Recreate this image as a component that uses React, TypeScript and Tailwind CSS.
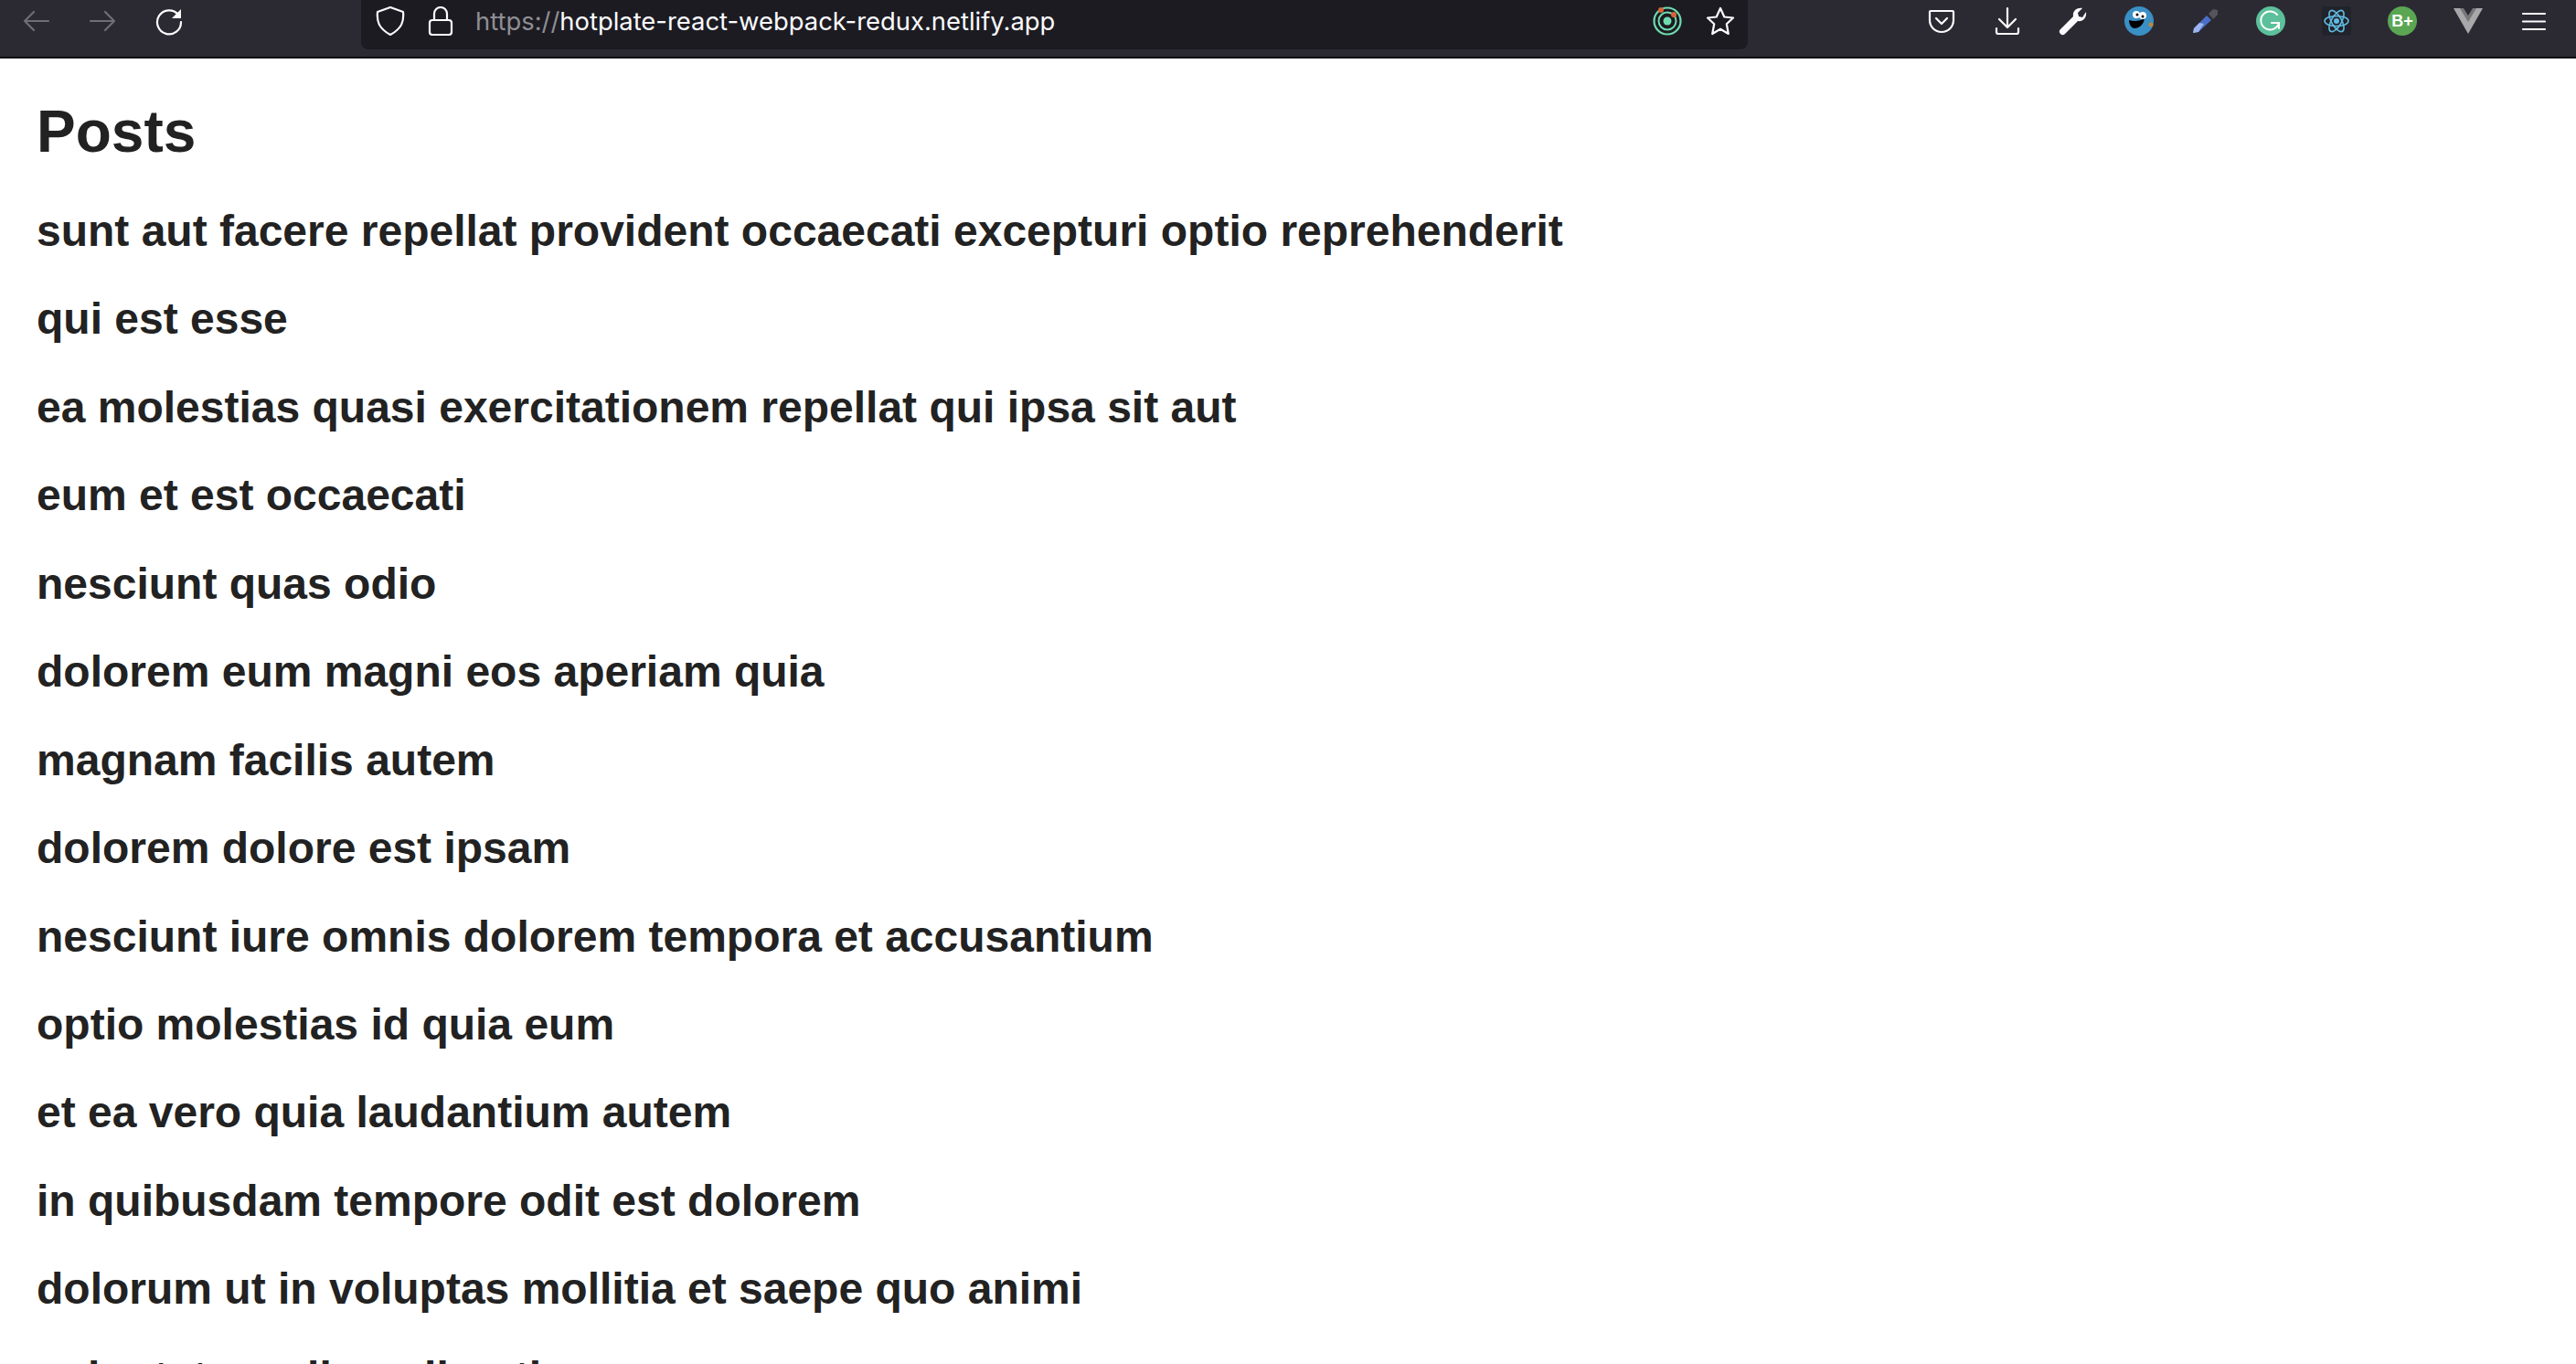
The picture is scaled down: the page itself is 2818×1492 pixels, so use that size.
import React from 'react';

const posts = [
  'sunt aut facere repellat provident occaecati excepturi optio reprehenderit',
  'qui est esse',
  'ea molestias quasi exercitationem repellat qui ipsa sit aut',
  'eum et est occaecati',
  'nesciunt quas odio',
  'dolorem eum magni eos aperiam quia',
  'magnam facilis autem',
  'dolorem dolore est ipsam',
  'nesciunt iure omnis dolorem tempora et accusantium',
  'optio molestias id quia eum',
  'et ea vero quia laudantium autem',
  'in quibusdam tempore odit est dolorem',
  'dolorum ut in voluptas mollitia et saepe quo animi',
  'voluptatem eligendi optio',
];

function Icon({ children, dim }: { children: React.ReactNode; dim?: boolean }) {
  return (
    <svg
      viewBox="0 0 32 32"
      fill="none"
      stroke="currentColor"
      strokeWidth={2.2}
      strokeLinecap="round"
      strokeLinejoin="round"
      className={`w-8 h-8 shrink-0 ${dim ? 'text-[#6f6e75]' : 'text-[#fbfbfe]'}`}
    >
      {children}
    </svg>
  );
}

function Toolbar() {
  return (
    <header className="flex items-start h-[64px] shrink-0 bg-[#2b2a33] border-b-2 border-[#0c0c0d]">
      {/* back, forward, reload */}
      <div className="flex items-center w-[395px] h-[46px] pl-[24px] gap-[40px]">
        <Icon dim><path d="M29 16H3M13 6 3 16l10 10" /></Icon>
        <Icon dim><path d="M3 16h26M19 6l10 10-10 10" /></Icon>
        <Icon>
          <path d="M27 9a13 13 0 1 0 3 8" />
          <path d="M30 3v10H20z" fill="currentColor" stroke="none" />
        </Icon>
      </div>

      {/* url bar */}
      <div className="flex items-center w-[1517px] h-[54px] pb-[8px] pl-[16px] pr-[14px] bg-[#1c1b22] rounded-b-lg">
        <Icon><path d="M16 1 30 6c1 10-1 18-14 25C3 24 1 16 2 6z" /></Icon>
        <div className="ml-[23px]">
          <Icon>
            <rect x="4" y="15" width="24" height="16" rx="3" />
            <path d="M9 15V8a7 7 0 0 1 14 0v7" />
          </Icon>
        </div>
        <div
          className="ml-[22px] mt-[2px] text-[27.4px] leading-none text-[#fbfbfe] whitespace-nowrap"
          style={{ fontFamily: 'Inter, sans-serif' }}
        >
          <span className="text-[#8f8f94]">https://</span>hotplate-react-webpack-redux.netlify.app
        </div>
        <div className="ml-auto flex items-center gap-[26px]">
          <svg viewBox="0 0 32 32" fill="none" className="w-8 h-8 shrink-0">
            <circle cx="16" cy="16" r="14.5" stroke="#6fdcae" strokeWidth="2.2" />
            <circle cx="16" cy="16" r="9.5" stroke="#6fdcae" strokeWidth="2" />
            <circle cx="16" cy="16" r="4.5" fill="#6fdcae" />
            <circle cx="9" cy="4" r="3" fill="#d8643a" />
            <circle cx="23" cy="9" r="3" fill="#d8643a" />
          </svg>
          <Icon><path d="m16 2 4.300 9.500L30 12.500l-7.200 6.800L24.800 30 16 24.800 7.200 30l2-10.700L2 12.500l9.700-1z" /></Icon>
        </div>
      </div>

      {/* extensions */}
      <div className="flex items-center h-[46px] pl-[196px] gap-[40px]">
        <Icon>
          <path d="M4 5h24a1 1 0 0 1 1 1v9a13 13 0 0 1-26 0V6a1 1 0 0 1 1-1z" />
          <path d="m10 13 6 6 6-6" />
        </Icon>
        <Icon>
          <path d="M16 2v21M7 14l9 9 9-9" />
          <path d="M4 24v4a2 2 0 0 0 2 2h20a2 2 0 0 0 2-2v-4" />
        </Icon>
        <svg viewBox="0 0 32 32" className="w-8 h-8 shrink-0">
          <path
            d="M30 6c1 6-3 11-9 10L7 30a3 3 0 0 1-5-5l14-14c-1-6 4-10 10-9l-5 5 1 4 4 1z"
            fill="#fbfbfe"
          />
        </svg>
        <svg viewBox="0 0 32 32" className="w-8 h-8 shrink-0">
          <circle cx="16" cy="16" r="16" fill="#3a8fc4" />
          <path d="M5 15c6 2 12 1 17-2-1 7-6 11-11 11-3 0-6-4-6-9z" fill="#000" />
          <circle cx="13" cy="9" r="4" fill="#fff" />
          <circle cx="20" cy="10" r="4" fill="#fff" />
          <circle cx="14" cy="9" r="1.500" fill="#000" />
          <circle cx="20" cy="11" r="1.500" fill="#000" />
          <circle cx="29" cy="20" r="2.500" fill="#b98a3e" />
        </svg>
        <svg viewBox="0 0 32 32" className="w-8 h-8 shrink-0">
          <path d="m3 29 1-5 14-14 5 5L9 28z" fill="#4a6fc9" />
          <path d="m3 29 1-5 6-6 5 1-6 9z" fill="#9db4ee" />
          <path d="m20 8 5-5 5 1 0 5-5 5z" fill="#55545b" />
        </svg>
        <svg viewBox="0 0 32 32" fill="none" className="w-8 h-8 shrink-0">
          <circle cx="16" cy="16" r="16" fill="#5cc09a" />
          <path d="M23 9a10 10 0 1 0 2 9h-8m8 0v6" stroke="#fff" strokeWidth="2" strokeLinecap="round" />
        </svg>
        <svg viewBox="0 0 32 32" fill="none" className="w-8 h-8 shrink-0">
          <rect width="32" height="32" rx="2" fill="#20232a" />
          <circle cx="16" cy="16" r="3" fill="#61b8e0" />
          <g stroke="#61b8e0" strokeWidth="1.600">
            <ellipse cx="16" cy="16" rx="13" ry="5.500" />
            <ellipse cx="16" cy="16" rx="13" ry="5.500" transform="rotate(60 16 16)" />
            <ellipse cx="16" cy="16" rx="13" ry="5.500" transform="rotate(120 16 16)" />
          </g>
        </svg>
        <div
          className="flex items-center justify-center w-8 h-8 shrink-0 rounded-full bg-[#5ba653] text-white text-[18px] font-bold leading-none"
          style={{ fontFamily: '"Liberation Sans", sans-serif' }}
        >
          B+
        </div>
        <svg viewBox="0 0 32 32" className="w-8 h-8 shrink-0">
          <path d="M0 2h32L16 30z" fill="#a8a8aa" />
          <path d="M7 2h18L16 17z" fill="#77777a" />
          <path d="M11 2h10l-5 8z" fill="#2b2a33" />
        </svg>
        <Icon><path d="M4 8h24M4 16.500h24M4 25h24" /></Icon>
      </div>
    </header>
  );
}

export default function App() {
  return (
    <div
      className="flex flex-col h-[1492px] overflow-hidden bg-white text-[#222222]"
      style={{ fontFamily: '"Liberation Sans", Arial, sans-serif' }}
    >
      <Toolbar />
      <main className="px-[40px]">
        <h1 className="mt-[44px] text-[64px] leading-[72px] font-bold">Posts</h1>
        <div className="mt-[45px] flex flex-col gap-[40.45px]">
          {posts.map((title) => (
            <h3 key={title} className="text-[48px] leading-[56px] font-bold whitespace-nowrap">
              {title}
            </h3>
          ))}
        </div>
      </main>
    </div>
  );
}
